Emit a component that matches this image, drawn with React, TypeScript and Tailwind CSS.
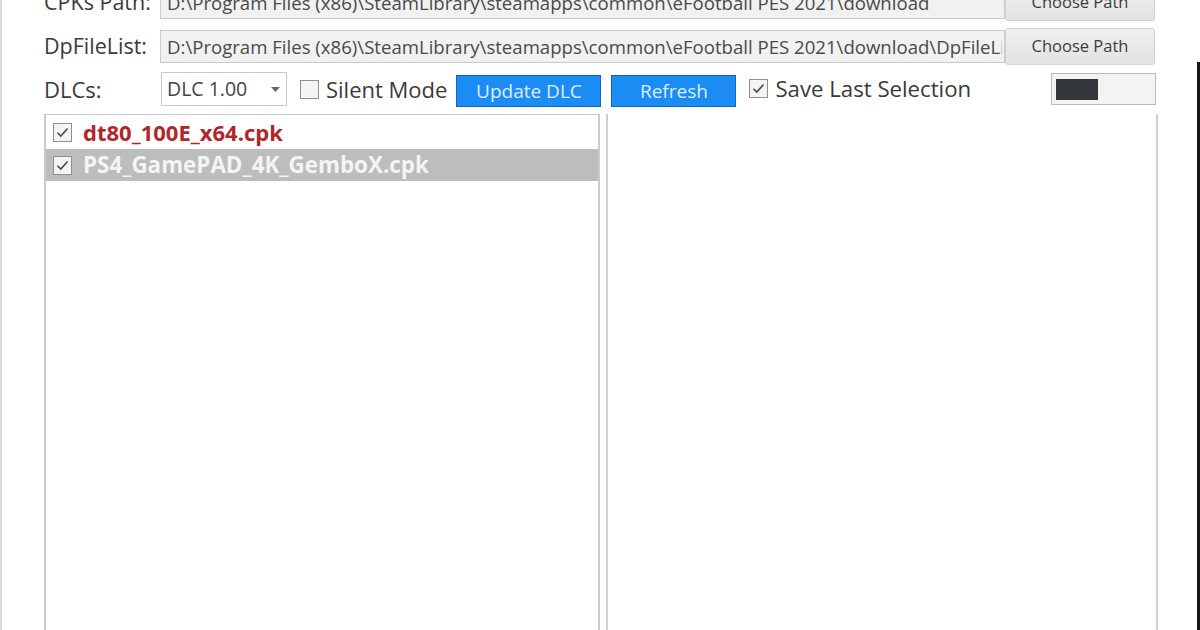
const font = "font-['Segoe_UI','Open_Sans',sans-serif]"

const Check = ({ checked }: { checked: boolean }) => (
  <span className="w-[19px] h-[19px] border border-[#8f8f8f] bg-[#f4f4f4] flex items-center justify-center shrink-0">
    {checked && (
      <svg width="13" height="11" viewBox="0 0 13 11">
        <path d="M1.5 5.8 L4.8 9 L11.5 1.5" fill="none" stroke="#4a4a4a" strokeWidth="1.6" />
      </svg>
    )}
  </span>
)

const PathRow = ({ label, path }: { label: string; path: string }) => (
  <div className="flex items-center h-[37px]">
    <div className="w-[116px] text-[21.5px] text-[#3a3a3a] whitespace-nowrap">{label}</div>
    <div className="w-[845px] h-[33px] border border-[#c9c9c9] bg-[#f1f1f1] flex items-center pl-[6px] pr-[2px]">
      <span className="block w-full overflow-hidden whitespace-nowrap text-[18.6px] text-[#4a4a4a]">{path}</span>
    </div>
    <button className="w-[150px] h-[37px] rounded-[3px] border border-[#d2d2d2] bg-gradient-to-b from-[#f0f0f0] to-[#e2e2e2] text-[16.5px] text-[#3c3c3c]">
      Choose Path
    </button>
  </div>
)

const App = () => {
  return (
    <div className={`w-[1200px] h-[630px] overflow-hidden bg-white flex ${font}`}>
      <div className="w-[1197px] border-l-2 border-[#dadada] flex flex-col pl-[42px]">
        <div className="flex flex-col gap-[7px] -mt-[16px]">
          <PathRow
            label="CPKs Path:"
            path="D:\Program Files (x86)\SteamLibrary\steamapps\common\eFootball PES 2021\download"
          />
          <PathRow
            label="DpFileList:"
            path="D:\Program Files (x86)\SteamLibrary\steamapps\common\eFootball PES 2021\download\DpFileList.bin"
          />
        </div>

        {/* DLC row */}
        <div className="flex items-center w-[1112px] h-[34px] mt-[7px] text-[#3a3a3a]">
          <div className="w-[117px] text-[22px]">DLCs:</div>
          <div className="w-[126px] h-[34px] border border-[#c8c8c8] bg-white flex items-center justify-between pl-[5px] pr-[6px] text-[19.5px] text-[#444]">
            <span>DLC 1.00</span>
            <svg width="9" height="5" viewBox="0 0 9 5">
              <path d="M0 0 H9 L4.5 5 Z" fill="#666" />
            </svg>
          </div>
          <div className="ml-[13px] flex items-center gap-[7px]">
            <Check checked={false} />
            <span className="text-[22px]">Silent Mode</span>
          </div>
          <button className="ml-[9px] mt-[4px] w-[145px] h-[32px] bg-[#1c8cf5] border border-[#1466c0] text-[#dcecff] text-[19px]">
            Update DLC
          </button>
          <button className="ml-[10px] mt-[4px] w-[125px] h-[32px] bg-[#1c8cf5] border border-[#1466c0] text-[#dcecff] text-[19px]">
            Refresh
          </button>
          <div className="ml-[13px] flex items-center gap-[7px]">
            <Check checked={true} />
            <span className="text-[22.2px]">Save Last Selection</span>
          </div>
          <div className="ml-auto w-[105px] h-[32px] border border-[#b9b9b9] bg-[#f3f3f3] flex items-center pl-[4px]">
            <div className="w-[42px] h-[21px] bg-[#33363a]" />
          </div>
        </div>

        {/* panels */}
        <div className="flex mt-[8px] flex-1 w-[1114px]">
          <div className="w-[556px] border-x-2 border-t border-[#cacaca] flex flex-col pt-[1px]">
            <div className="flex items-center gap-[11px] h-[33px] pl-[7px] bg-white">
              <Check checked={true} />
              <span className="text-[22px] font-bold text-[#b0262a]">dt80_100E_x64.cpk</span>
            </div>
            <div className="flex items-center gap-[11px] h-[32px] pl-[7px] bg-[#bdbdbd]">
              <Check checked={true} />
              <span className="text-[22.4px] font-bold text-[#f4f4f4]">PS4_GamePAD_4K_GemboX.cpk</span>
            </div>
          </div>
          <div className="ml-[6px] flex-1 border-l-2 border-r-2 border-[#cfcfcf]" />
        </div>
      </div>
      <div className="flex-1 pt-[62px]">
        <div className="h-full bg-[#151515]" />
      </div>
    </div>
  )
}

export default App
